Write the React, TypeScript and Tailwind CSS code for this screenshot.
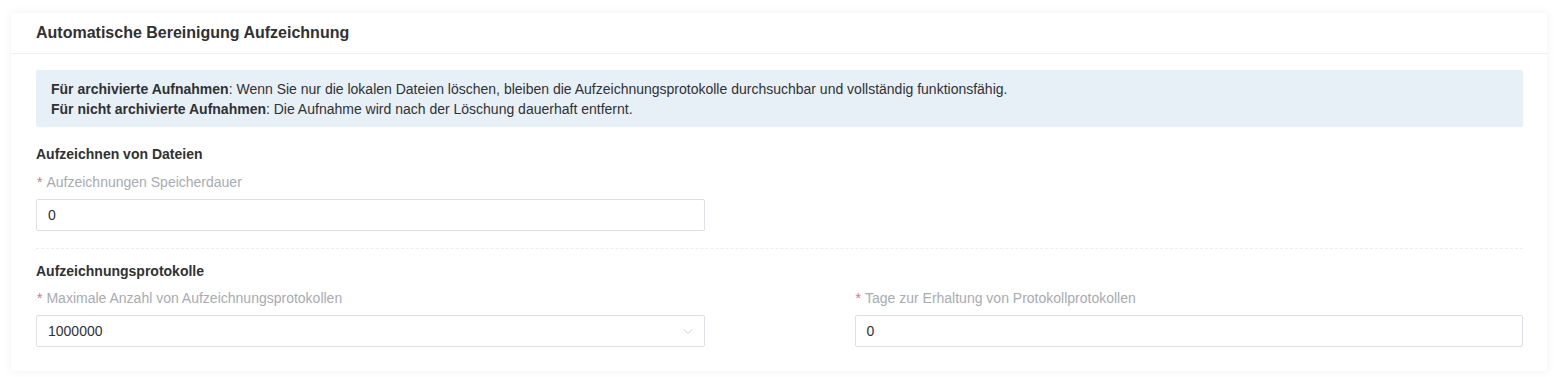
import React from 'react';

function Label({ text }: { text: string }) {
    return (
        <div className="h-5 leading-5 text-[14px] text-[#a8abb2]">
            <span className="text-[#f56c6c] ml-px mr-[4px]">*</span>
            {text}
        </div>
    );
}

function Field({ value, select = false }: { value: string; select?: boolean }) {
    return (
        <div className="relative h-8 border border-[#dcdfe6] rounded-[2px] bg-white px-[11px] flex items-center text-[14px] text-[#303133]">
            {value}
            {select && (
                <svg className="absolute right-[10px] top-1/2 -translate-y-1/2" width="12" height="12" viewBox="0 0 12 12" fill="none">
                    <path d="M1.5 4l4.5 4.5L10.5 4" stroke="#d0d3d9" strokeWidth="1" />
                </svg>
            )}
        </div>
    );
}

export default function App() {
    return (
        <div className="w-[1564px] h-[377px] bg-white font-['Liberation_Sans',Arial,sans-serif] pt-[13px] pl-[11px]">
            <div className="w-[1536px] bg-white rounded-[3px] shadow-[0_0_10px_rgba(0,0,0,0.06)]">
                {/* Header */}
                <div className="h-[41px] border-b border-[#ebeef5] flex items-center pl-[25px] pr-6">
                    <h3 className="text-[16px] font-bold text-[#303133]">Automatische Bereinigung Aufzeichnung</h3>
                </div>

                {/* Body */}
                <div className="pl-[25px] pr-6 pt-4 pb-6">
                    <div className="bg-[#e7f0f6] rounded-[2px] pl-[15px] pr-4 pt-[9px] pb-2 text-[14px] leading-5 text-[#303133]">
                        <div>
                            <span className="font-bold">Für archivierte Aufnahmen</span>: Wenn Sie nur die lokalen Dateien löschen, bleiben die Aufzeichnungsprotokolle durchsuchbar und vollständig funktionsfähig.
                        </div>
                        <div>
                            <span className="font-bold">Für nicht archivierte Aufnahmen</span>: Die Aufnahme wird nach der Löschung dauerhaft entfernt.
                        </div>
                    </div>

                    <div className="mt-[17px] h-5 leading-5 text-[14px] font-bold text-[#303133]">Aufzeichnen von Dateien</div>
                    <div className="grid grid-cols-2 gap-x-[150px] mt-2">
                        <div>
                            <Label text="Aufzeichnungen Speicherdauer" />
                            <div className="mt-[7px]">
                                <Field value="0" />
                            </div>
                        </div>
                    </div>

                    <div className="mt-[17px] border-t border-dashed border-[#ebeef5]" />

                    <div className="mt-3 h-5 leading-5 text-[14px] font-bold text-[#303133]">Aufzeichnungsprotokolle</div>
                    <div className="grid grid-cols-2 gap-x-[150px] mt-[7px]">
                        <div>
                            <Label text="Maximale Anzahl von Aufzeichnungsprotokollen" />
                            <div className="mt-[7px]">
                                <Field value="1000000" select />
                            </div>
                        </div>
                        <div>
                            <Label text="Tage zur Erhaltung von Protokollprotokollen" />
                            <div className="mt-[7px]">
                                <Field value="0" />
                            </div>
                        </div>
                    </div>
                </div>
            </div>
        </div>
    );
}
